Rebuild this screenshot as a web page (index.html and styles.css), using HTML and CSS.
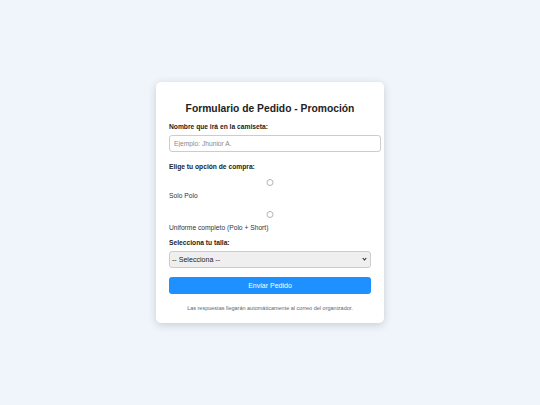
FILE: index.html
```html
<!DOCTYPE html>
<html lang="es">
<head>
<meta charset="utf-8">
<title>Formulario de Pedido</title>
<link rel="stylesheet" href="styles.css">
</head>
<body>
<form class="card">
  <h2 class="title">Formulario de Pedido - Promoción</h2>
  <label class="label" for="nombre">Nombre que irá en la camiseta:</label>
  <input class="text-input" id="nombre" type="text" placeholder="Ejemplo: Jhunior A.">
  <p class="label group-label">Elige tu opción de compra:</p>
  <div class="option">
    <input class="radio" type="radio" name="opcion" id="op1">
    <label class="option-label" for="op1">Solo Polo</label>
  </div>
  <div class="option option-second">
    <input class="radio" type="radio" name="opcion" id="op2">
    <label class="option-label" for="op2">Uniforme completo (Polo + Short)</label>
  </div>
  <label class="label size-label" for="talla">Selecciona tu talla:</label>
  <div class="select-wrap">
    <select class="select" id="talla">
      <option>-- Selecciona --</option>
    </select>
  </div>
  <button class="submit" type="button">Enviar Pedido</button>
  <p class="note">Las respuestas llegarán automáticamente al correo del organizador.</p>
</form>
</body>
</html>
```
FILE: styles.css
```css
html, body {
  margin: 0;
  height: 100%;
}
body {
  background: #f0f4fb;
  font-family: "Liberation Sans", Arial, sans-serif;
  display: flex;
  align-items: center;
  justify-content: center;
}
.card {
  width: 202px;
  padding: 13px 13px 12px;
  background: #fff;
  border-radius: 5px;
  box-shadow: 0 2px 8px rgba(0, 0, 0, 0.16);
  display: flex;
  flex-direction: column;
  align-items: stretch;
}
.title {
  font-size: 10.3px;
  line-height: 12px;
  text-align: center;
  color: #222;
  margin: 8px 0 8px;
}
.label {
  display: block;
  font-size: 6.7px;
  line-height: 8px;
  font-weight: bold;
  color: #222;
  margin: 0 0 4px;
}
.group-label {
  margin-top: 11px;
}
.text-input {
  box-sizing: content-box;
  width: 100%;
  height: 15px;
  padding: 0 4px;
  border: 1px solid #ccc;
  border-radius: 3px;
  font-size: 6.7px;
  font-family: inherit;
  margin: 0;
  outline: none;
}
.text-input::placeholder {
  color: #8a8a8a;
}
.option {
  display: flex;
  flex-direction: column;
}
.radio {
  width: 100%;
  height: 7px;
  margin: 4px 0 0;
  opacity: 0.55;
}
.option-second .radio {
  margin-top: 11px;
}
.option-label {
  font-size: 6.7px;
  line-height: 8px;
  color: #333;
  margin: 6px 0 0;
}
.size-label {
  margin-top: 7px;
}
.select-wrap {
  position: relative;
}
.select {
  display: block;
  width: 100%;
  height: 17px;
  font-size: 7.1px;
  font-family: inherit;
  padding: 0 2px;
  border: 1px solid #ccc;
  border-radius: 3px;
  background: #efefef;
  color: #222;
  margin: 0;
  appearance: none;
  -webkit-appearance: none;
}
.select-wrap::after {
  content: "";
  position: absolute;
  right: 5px;
  top: 6px;
  width: 2px;
  height: 2px;
  border-right: 1.2px solid #222;
  border-bottom: 1.2px solid #222;
  transform: rotate(45deg);
  pointer-events: none;
}
.submit {
  margin-top: 9px;
  height: 17px;
  border: none;
  border-radius: 3px;
  background: #1e90ff;
  color: #fff;
  font-size: 7px;
  font-family: inherit;
}
.note {
  font-size: 5.5px;
  line-height: 6px;
  color: #666;
  text-align: center;
  margin: 11px 0 0;
}
```
